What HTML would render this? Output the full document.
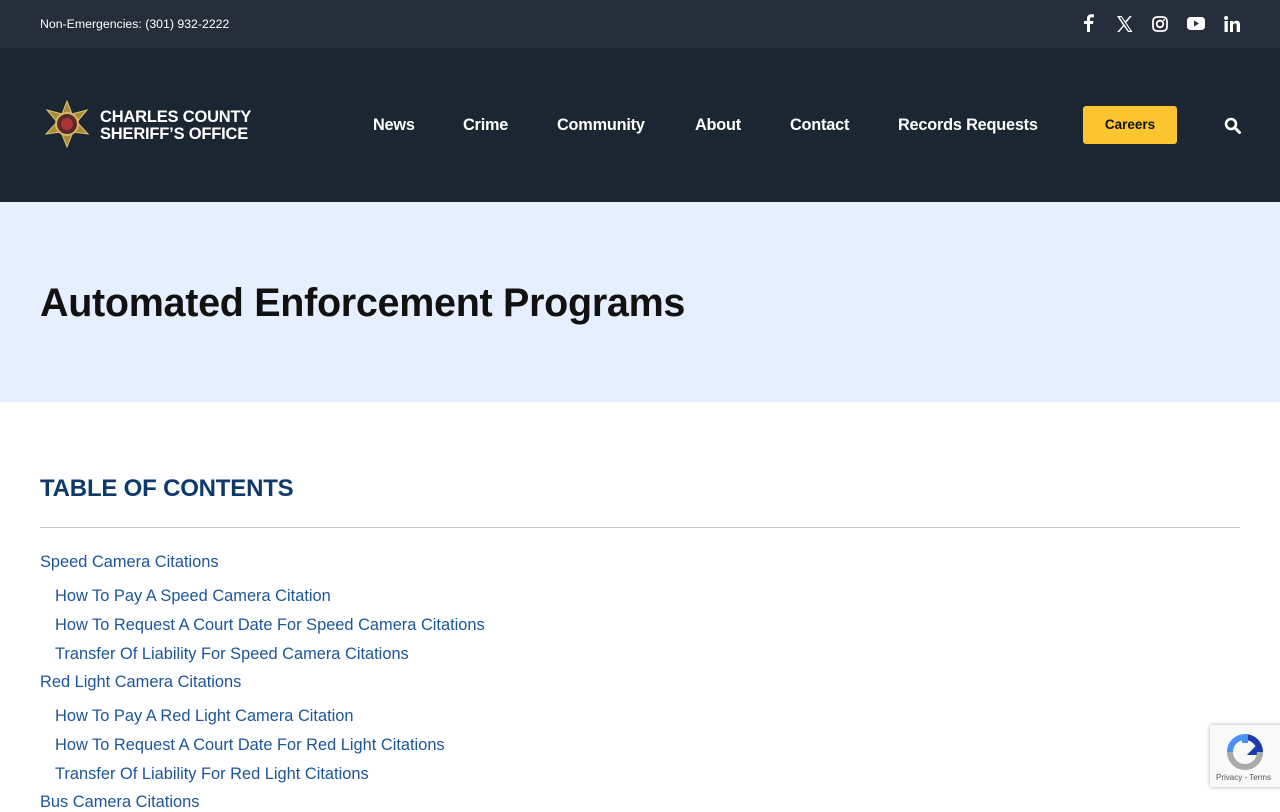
<!DOCTYPE html>
<html><head><meta charset="utf-8"><style>
*{margin:0;padding:0;box-sizing:border-box}
body{width:1280px;height:800px;overflow:hidden;font-family:"Liberation Sans",sans-serif;background:#fff}
.top{height:48px;background:#252e3a;color:#fff;position:relative}
.top .ph{position:absolute;left:40px;top:17px;font-size:12.3px}
.soc{position:absolute;top:14px;display:block}
.hdr{height:154px;background:#1c2532;position:relative;color:#fff}
.logo{position:absolute;left:42px;top:100px}
.lt{position:absolute;left:100px;font-weight:bold;font-size:16.5px;line-height:17px;letter-spacing:-0.2px}
.nav{position:absolute;font-size:16.3px;font-weight:bold;color:#fff;letter-spacing:-0.2px}
.car{position:absolute;left:1083px;width:94px;height:38px;background:#fbc530;border-radius:3px;color:#111;font-size:13.5px;font-weight:bold;text-align:center;line-height:37px}
.hero{position:absolute;top:202px;left:0;width:1280px;height:200px;background:#e6effd}
.hero h1{position:absolute;left:40px;top:79px;font-size:39.5px;color:#111;letter-spacing:-0.3px}
.toc{position:absolute;left:40px;top:475px;font-size:24px;font-weight:bold;color:#0d3a6a;letter-spacing:-0.2px}
.hr{position:absolute;left:40px;top:527px;width:1200px;height:1px;background:#ccc}
.l{position:absolute;font-size:16.4px;color:#1d5599}
</style></head><body>
<div class="top"><div class="ph">Non-Emergencies: (301) 932-2222</div>
<svg class="soc" style="left:1082px" width="12" height="18" viewBox="0 0 12 18"><path d="M8 18V10h3l.5-3H8V5c0-1 .4-1.6 1.7-1.6H12V.5C11.5.4 10.5.3 9.4.3 6.8.3 5 1.8 5 4.6V7H2v3h3v8z" fill="#fff"/></svg>
<svg class="soc" style="left:1116px;top:16px" width="17" height="16" viewBox="0 0 17 16"><path d="M1 0h4.5l3.8 5.2L13.8 0h2L10.2 6.6 16.5 16H12L8 10.4 3.2 16h-2l5.9-6.7z M3.5 1.2l9.3 13.6h1.6L5.2 1.2z" fill="#fff" fill-rule="evenodd"/></svg>
<svg class="soc" style="left:1152px;top:16px" width="16" height="16" viewBox="0 0 16 16"><rect x="1" y="1" width="14" height="14" rx="4" fill="none" stroke="#fff" stroke-width="1.8"/><circle cx="8" cy="8" r="3.3" fill="none" stroke="#fff" stroke-width="1.8"/><circle cx="12" cy="4" r="1" fill="#fff"/></svg>
<svg class="soc" style="left:1187px;top:17px" width="18" height="13" viewBox="0 0 18 13"><rect width="18" height="13" rx="3.5" fill="#fff"/><path d="M7 3.5v6l5-3z" fill="#252e3a"/></svg>
<svg class="soc" style="left:1224px;top:16px" width="16" height="16" viewBox="0 0 16 16"><rect x="0.5" y="5" width="3.3" height="11" fill="#fff"/><circle cx="2.1" cy="2" r="2" fill="#fff"/><path d="M6 5h3.2v1.6C10 5.3 11.2 4.8 12.6 4.8 15 4.8 16 6.3 16 9v7h-3.3V9.8c0-1.5-.4-2.4-1.7-2.4-1.4 0-2 1-2 2.5V16H6z" fill="#fff"/></svg>
</div>
<div class="hdr">
<svg class="logo" style="top:52px" width="50" height="50" viewBox="0 0 50 50"><polygon points="25,1 30,14 45,10 35,22 46,34 31,32 25,47 19,32 4,34 15,22 5,10 20,14" fill="#a88a3d" stroke="#e0c56e" stroke-width="1"/><circle cx="25" cy="24" r="11" fill="#5a2a2a" stroke="#d8b862" stroke-width="2"/><circle cx="25" cy="24" r="6" fill="#a33"/></svg>
<div class="lt" style="top:61px">CHARLES COUNTY<br>SHERIFF’S OFFICE</div>
<div class="nav" style="left:373px;top:68px">News</div>
<div class="nav" style="left:463px;top:68px">Crime</div>
<div class="nav" style="left:557px;top:68px">Community</div>
<div class="nav" style="left:695px;top:68px">About</div>
<div class="nav" style="left:790px;top:68px">Contact</div>
<div class="nav" style="left:898px;top:68px">Records Requests</div>
<div class="car" style="top:58px">Careers</div>
<svg style="position:absolute;left:1224px;top:69px" width="17" height="17" viewBox="0 0 17 17"><circle cx="7" cy="7" r="5" fill="none" stroke="#fff" stroke-width="2.6"/><path d="M10.5 10.5L15.5 15.5" stroke="#fff" stroke-width="3" stroke-linecap="round"/></svg>
</div>
<div class="hero"><h1>Automated Enforcement Programs</h1></div>
<div class="toc">TABLE OF CONTENTS</div>
<div class="hr"></div>
<div class="l" style="left:40px;top:553px">Speed Camera Citations</div>
<div class="l" style="left:55px;top:587px">How To Pay A Speed Camera Citation</div>
<div class="l" style="left:55px;top:616px">How To Request A Court Date For Speed Camera Citations</div>
<div class="l" style="left:55px;top:645px">Transfer Of Liability For Speed Camera Citations</div>
<div class="l" style="left:40px;top:673px">Red Light Camera Citations</div>
<div class="l" style="left:55px;top:707px">How To Pay A Red Light Camera Citation</div>
<div class="l" style="left:55px;top:736px">How To Request A Court Date For Red Light Citations</div>
<div class="l" style="left:55px;top:765px">Transfer Of Liability For Red Light Citations</div>
<div class="l" style="left:40px;top:793px">Bus Camera Citations</div>
<div style="position:absolute;left:1210px;top:725px;width:76px;height:62px;background:#f9f9f9;box-shadow:0 0 4px rgba(0,0,0,.3);border-radius:2px">
<svg style="position:absolute;left:16px;top:8px" width="38" height="38" viewBox="0 0 38 38"><path d="M19 4a15 15 0 0 1 15 15h-6l4-4" fill="none" stroke="#1c3aa9" stroke-width="6"/><path d="M4 19A15 15 0 0 1 19 4v6" fill="none" stroke="#4a90f5" stroke-width="6"/><path d="M34 19A15 15 0 0 1 4 19" fill="none" stroke="#ababab" stroke-width="6"/></svg>
<div style="position:absolute;left:6px;top:48px;font-size:8px;color:#555">Privacy - Terms</div></div>
</body></html>
